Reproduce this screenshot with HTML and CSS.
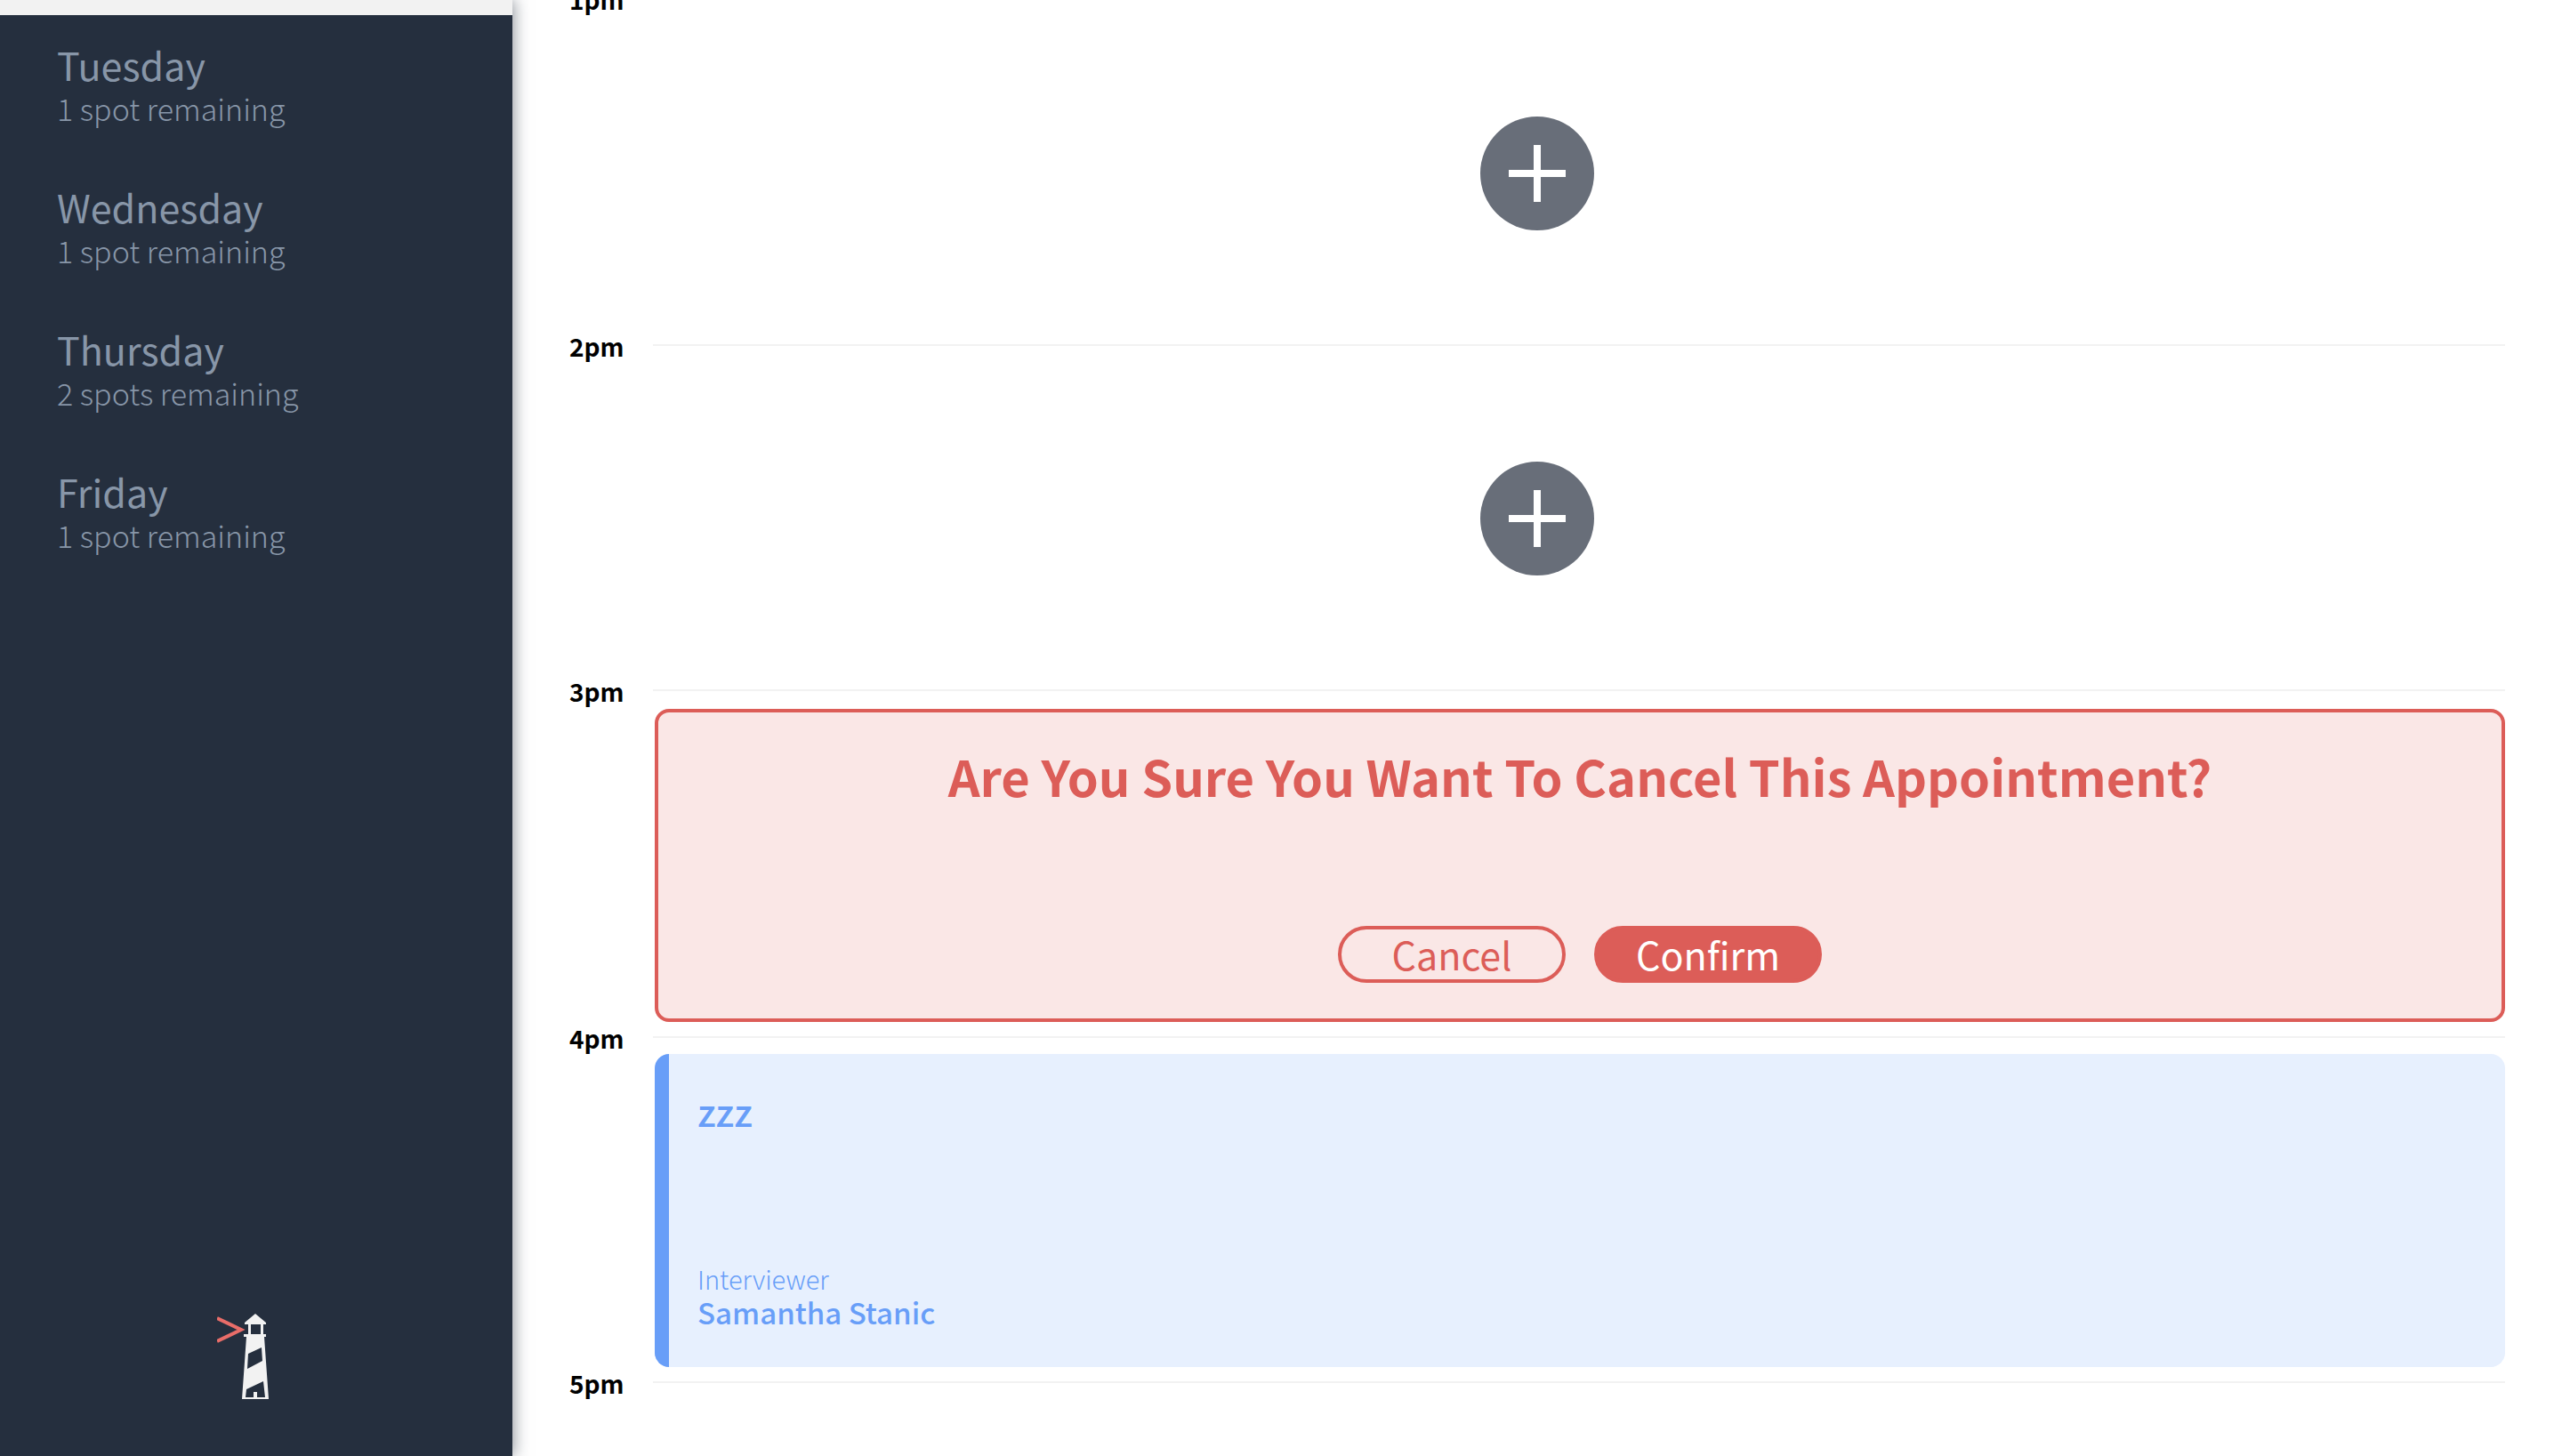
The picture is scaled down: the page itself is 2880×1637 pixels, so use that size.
FILE: index.html
```html
<!DOCTYPE html>
<html lang="en">
<head>
<meta charset="utf-8">
<title>Interview Scheduler</title>
<link rel="stylesheet" href="styles.css">
</head>
<body>
<div class="layout">
  <aside class="sidebar">
    <nav class="days" aria-label="Days">
      <ul class="day-list">
        <li class="day-item day-item--selected"></li>
        <li class="day-item"><h2 class="day-name">Tuesday</h2><p class="day-spots">1 spot remaining</p></li>
        <li class="day-item"><h2 class="day-name">Wednesday</h2><p class="day-spots">1 spot remaining</p></li>
        <li class="day-item"><h2 class="day-name">Thursday</h2><p class="day-spots">2 spots remaining</p></li>
        <li class="day-item"><h2 class="day-name">Friday</h2><p class="day-spots">1 spot remaining</p></li>
      </ul>
    </nav>
    <svg class="logo" viewBox="0 0 88 96" role="img" aria-label="Lighthouse Labs">
      <path d="M0 5 L27 18 L0 31" fill="none" stroke="#e96d69" stroke-width="4"/>
      <path fill="#f2f2f2" fill-rule="evenodd" d="M43 0 L55 10 V12 H52 V23 H55 V26 H53 L58 96 H28 L33 26 H30 V23 H35 V12 H31 V10 Z M38 12 V23 H49 V12 Z M35 45 L50 38 L51 53 L34 62 Z M33 85 L52 76 L54 94 H45 V88 H41 V94 H32 Z"/>
    </svg>
  </aside>
  <main class="schedule">
    <section class="slot">
      <header class="slot-time"><h3 class="slot-label">1pm</h3><hr class="slot-line"></header>
      <div class="slot-add"><button class="add-button" type="button" aria-label="Add"><svg class="add-icon" viewBox="0 0 64 64"><path fill="#fff" d="M28 0h8v28h28v8H36v28h-8V36H0v-8h28z"/></svg></button></div>
    </section>
    <section class="slot">
      <header class="slot-time"><h3 class="slot-label">2pm</h3><hr class="slot-line"></header>
      <div class="slot-add"><button class="add-button" type="button" aria-label="Add"><svg class="add-icon" viewBox="0 0 64 64"><path fill="#fff" d="M28 0h8v28h28v8H36v28h-8V36H0v-8h28z"/></svg></button></div>
    </section>
    <section class="slot">
      <header class="slot-time"><h3 class="slot-label">3pm</h3><hr class="slot-line"></header>
      <div class="card card--confirm">
        <h1 class="confirm-title">Are You Sure You Want To Cancel This Appointment?</h1>
        <div class="confirm-actions">
          <button class="button" type="button">Cancel</button>
          <button class="button button--solid" type="button">Confirm</button>
        </div>
      </div>
    </section>
    <section class="slot">
      <header class="slot-time"><h3 class="slot-label">4pm</h3><hr class="slot-line"></header>
      <div class="card card--show">
        <h2 class="student">zzz</h2>
        <div class="interviewer">
          <h4 class="interviewer-label">Interviewer</h4>
          <p class="interviewer-name">Samantha Stanic</p>
        </div>
      </div>
    </section>
    <section class="slot">
      <header class="slot-time"><h3 class="slot-label">5pm</h3><hr class="slot-line"></header>
    </section>
  </main>
</div>
</body>
</html>
```
FILE: styles.css
```css
* { box-sizing: border-box; }
html, body { margin: 0; height: 100%; }
body {
  background: #fff;
  color: #000;
  font-family: "Noto Sans CJK SC", "Noto Sans", sans-serif;
  overflow: hidden;
}
h1, h2, h3, h4, p, ul { margin: 0; padding: 0; }

.layout { display: flex; height: 100vh; }

.sidebar {
  width: 20%;
  flex: none;
  display: flex;
  flex-direction: column;
  justify-content: space-between;
  align-items: center;
  padding-bottom: 64px;
  background: #252f3e;
  box-shadow: 2px 0 16px rgba(37, 47, 62, 0.5);
}
.days { width: 100%; }
.day-list { list-style: none; }
.day-item { height: 160px; padding: 30px 64px; color: #8896a8; }
.day-item--selected { height: 17px; padding: 0; background: #f2f2f2; }
.day-name { font-size: 43px; line-height: 50px; font-weight: 400; }
.day-spots { font-size: 34px; line-height: 50px; font-weight: 300; }
.logo { width: 88px; height: 96px; }

.schedule { flex: 1; min-width: 0; padding: 0 64px; overflow: hidden; }
.slot:first-child { margin-top: -19px; }
.slot:first-child .slot-time { margin-bottom: 2px; }
.slot-time { display: flex; height: 36px; }
.slot-label { width: 94px; font-size: 28px; line-height: 36px; font-weight: 700; }
.slot-line { flex: 1; height: 2px; margin: 16px 0 0; border: 0; background: #f2f2f2; }
.slot-add { display: flex; align-items: center; justify-content: center; height: 352px; }
.add-button {
  display: flex;
  align-items: center;
  justify-content: center;
  width: 128px;
  height: 128px;
  padding: 0;
  border: 0;
  border-radius: 50%;
  background: #686e79;
}
.add-icon { width: 64px; height: 64px; }

.card {
  display: flex;
  flex-direction: column;
  justify-content: space-between;
  height: 352px;
  margin-left: 96px;
  border-radius: 16px;
}
.card--confirm {
  align-items: center;
  margin-top: 2px;
  padding: 31px 48px 40px;
  border: 4px solid #dc5d58;
  background: #fae7e6;
  color: #dc5d58;
}
.confirm-title { font-size: 56px; line-height: 80px; font-weight: 700; }
.confirm-actions { display: flex; gap: 32px; }
.button {
  width: 256px;
  height: 64px;
  padding: 0 0 2px;
  border: 4px solid #dc5d58;
  border-radius: 32px;
  background: transparent;
  color: #dc5d58;
  font: 400 43px/54px "Noto Sans CJK SC", "Noto Sans", sans-serif;
}
.button--solid { background: #dc5d58; color: #fff; }
.card--show {
  padding: 32px 32px 42px;
  border-left: 16px solid #689ef8;
  background: #e7f0fe;
  color: #689ef8;
}
.student { font-size: 42px; line-height: 64px; font-weight: 500; }
.interviewer-label { font-size: 29px; line-height: 36px; font-weight: 300; }
.interviewer-name { font-size: 33px; line-height: 40px; font-weight: 500; }
```
